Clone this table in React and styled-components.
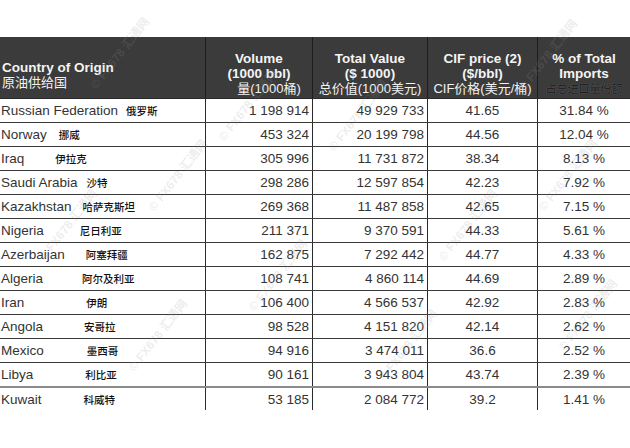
import styled, { createGlobalStyle } from 'styled-components';

const GlobalStyle = createGlobalStyle`
  html, body {
    margin: 0;
    padding: 0;
    background: #fff;
  }
  body {
    font-family: "Liberation Sans", Arial, "Noto Sans CJK SC", sans-serif;
  }
`;

const rows = [
  { en: 'Russian Federation', zh: '俄罗斯', gap: 8, vol: '1 198 914', val: '49 929 733', cif: '41.65', pct: '31.84 %' },
  { en: 'Norway', zh: '挪威', gap: 12, vol: '453 324', val: '20 199 798', cif: '44.56', pct: '12.04 %' },
  { en: 'Iraq', zh: '伊拉克', gap: 31, vol: '305 996', val: '11 731 872', cif: '38.34', pct: '8.13 %' },
  { en: 'Saudi Arabia', zh: '沙特', gap: 9, vol: '298 286', val: '12 597 854', cif: '42.23', pct: '7.92 %' },
  { en: 'Kazakhstan', zh: '哈萨克斯坦', gap: 11, vol: '269 368', val: '11 487 858', cif: '42.65', pct: '7.15 %' },
  { en: 'Nigeria', zh: '尼日利亚', gap: 36, vol: '211 371', val: '9 370 591', cif: '44.33', pct: '5.61 %' },
  { en: 'Azerbaijan', zh: '阿塞拜疆', gap: 21, vol: '162 875', val: '7 292 442', cif: '44.77', pct: '4.33 %' },
  { en: 'Algeria', zh: '阿尔及利亚', gap: 39, vol: '108 741', val: '4 860 114', cif: '44.69', pct: '2.89 %' },
  { en: 'Iran', zh: '伊朗', gap: 62, vol: '106 400', val: '4 566 537', cif: '42.92', pct: '2.83 %' },
  { en: 'Angola', zh: '安哥拉', gap: 41, vol: '98 528', val: '4 151 820', cif: '42.14', pct: '2.62 %' },
  { en: 'Mexico', zh: '墨西哥', gap: 43, vol: '94 916', val: '3 474 011', cif: '36.6', pct: '2.52 %' },
  { en: 'Libya', zh: '利比亚', gap: 52, vol: '90 161', val: '3 943 804', cif: '43.74', pct: '2.39 %' },
  { en: 'Kuwait', zh: '科威特', gap: 42, vol: '53 185', val: '2 084 772', cif: '39.2', pct: '1.41 %', grayTop: true, last: true },
];

const marks = [
  { x: 92, y: 78 }, { x: 520, y: 80 }, { x: 40, y: 250 }, { x: 150, y: 200 },
  { x: 330, y: 140 }, { x: 250, y: 300 }, { x: 440, y: 250 }, { x: 130, y: 360 },
  { x: 380, y: 370 }, { x: 560, y: 340 }, { x: 540, y: 200 }, { x: 220, y: 130 },
];

function App() {
  return (
    <>
      <GlobalStyle />
      <Page>
        <Table>
          <HeadRow>
            <HeadCell $align="left" $pb={7}>
              <HeadLine>Country of Origin</HeadLine>
              <HeadZh>原油供给国</HeadZh>
            </HeadCell>
            <HeadCell>
              <HeadLine>Volume</HeadLine>
              <HeadLine>(1000 bbl)</HeadLine>
              <HeadZh $shift={10}>量(1000桶)</HeadZh>
            </HeadCell>
            <HeadCell>
              <HeadLine>Total Value</HeadLine>
              <HeadLine>($ 1000)</HeadLine>
              <HeadZh>总价值(1000美元)</HeadZh>
            </HeadCell>
            <HeadCell>
              <HeadLine>CIF price (2)</HeadLine>
              <HeadLine>($/bbl)</HeadLine>
              <HeadZh>CIF价格(美元/桶)</HeadZh>
            </HeadCell>
            <HeadCell $last>
              <HeadLine>% of Total</HeadLine>
              <HeadLine>Imports</HeadLine>
              <HeadZh $small>占总进口量份额</HeadZh>
            </HeadCell>
          </HeadRow>
          {rows.map((r) => (
            <Row key={r.en} $grayTop={r.grayTop} $end={r.last}>
              <Cell $align="left">
                {r.en}
                <Zh style={{ marginLeft: r.gap }}>{r.zh}</Zh>
              </Cell>
              <Cell $align="right">{r.vol}</Cell>
              <Cell $align="right">{r.val}</Cell>
              <Cell>{r.cif}</Cell>
              <Cell $last>{r.pct}</Cell>
            </Row>
          ))}
        </Table>
        {marks.map((m, i) => (
          <Watermark key={i} style={{ left: m.x, top: m.y }}>
            © FX678 汇通网
          </Watermark>
        ))}
      </Page>
    </>
  );
}

export default App;

const Page = styled.div`
  position: relative;
  width: 630px;
  height: 448px;
  overflow: hidden;
  padding-top: 37px;
  box-sizing: border-box;
  background: #fff;
`;

const Table = styled.div`
  display: flex;
  flex-direction: column;
  width: 630px;
`;

const HeadRow = styled.div`
  display: grid;
  grid-template-columns: 206px 107px 115px 110px 92px;
  height: 61px;
  background: #3b3b3b;
  border-bottom: 1px solid #2a2a2a;
`;

const HeadCell = styled.div`
  display: flex;
  flex-direction: column;
  justify-content: flex-end;
  align-items: ${(p) => (p.$align === 'left' ? 'flex-start' : 'center')};
  padding: 0 0 ${(p) => p.$pb ?? 1}px ${(p) => (p.$align === 'left' ? 2 : 0)}px;
  border-right: ${(p) => (p.$last ? 'none' : '1px solid #1e1e1e')};
  color: #fff;
  overflow: hidden;
`;

const HeadLine = styled.div`
  font-size: 13.5px;
  font-weight: bold;
  line-height: 15px;
  white-space: nowrap;
  color: #f4f4f4;
`;

const HeadZh = styled.div`
  font-family: "Liberation Sans", Arial, "Noto Sans CJK SC", sans-serif;
  font-size: ${(p) => (p.$small ? 11 : 13)}px;
  font-weight: ${(p) => (p.$small ? 500 : 400)};
  color: ${(p) => (p.$small ? '#222' : '#f2f2f2')};
  line-height: 16px;
  white-space: nowrap;
  text-shadow: ${(p) => (p.$small ? '0 0 1px #777' : 'none')};
  margin-left: ${(p) => (p.$shift ? p.$shift * 2 : 0)}px;
`;

const Row = styled.div`
  display: grid;
  grid-template-columns: 206px 107px 115px 110px 92px;
  height: 24px;
  box-sizing: border-box;
  border-top: ${(p) => (p.$grayTop ? '2px solid #8a8a8a' : 'none')};
  margin-top: ${(p) => (p.$grayTop ? '-1px' : '0')};
  border-bottom: ${(p) => (p.$end ? 'none' : '1px solid #3a3a3a')};
`;

const Cell = styled.div`
  display: flex;
  align-items: center;
  justify-content: ${(p) =>
    p.$align === 'left' ? 'flex-start' : p.$align === 'right' ? 'flex-end' : 'center'};
  padding: ${(p) => (p.$align === 'left' ? '0 0 0 1px' : p.$align === 'right' ? '0 3px 0 0' : '0')};
  border-right: ${(p) => (p.$last ? 'none' : '1px solid #2a2a2a')};
  font-size: 13.5px;
  color: #333;
  white-space: nowrap;
`;

const Zh = styled.span`
  font-family: "Noto Sans CJK SC", sans-serif;
  font-size: 10.5px;
  font-weight: 500;
  color: #111;
`;

const Watermark = styled.div`
  position: absolute;
  transform: rotate(-52deg);
  transform-origin: left center;
  font-family: "Liberation Sans", Arial, "Noto Sans CJK SC", sans-serif;
  font-size: 12px;
  font-weight: bold;
  color: rgba(150, 150, 150, 0.18);
  white-space: nowrap;
  pointer-events: none;
`;
